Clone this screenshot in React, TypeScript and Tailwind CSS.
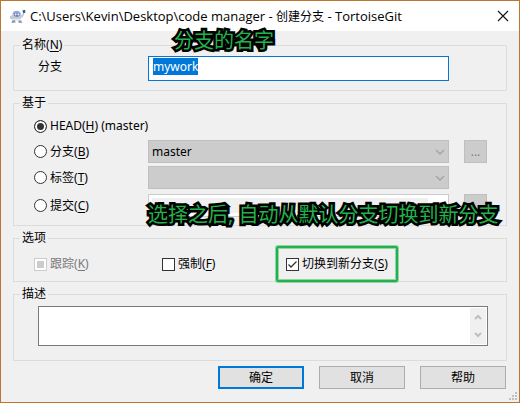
import { useEffect, useRef } from 'react';
import type { ReactNode } from 'react';

function Group({ title, hotkey, className, children }: { title: string; hotkey?: string; className: string; children: ReactNode }) {
  return (
    <fieldset className={`relative min-w-0 border border-[#dcdcdc] ${className}`}>
      <legend className="ml-1.5 h-4 px-0.5 leading-4">
        {title}
        {hotkey && <Hotkey k={hotkey} />}
      </legend>
      {children}
    </fieldset>
  );
}

function Hotkey({ k }: { k: string }) {
  return (
    <>
      (<span className="underline underline-offset-2">{k}</span>)
    </>
  );
}

function Radio({ id, checked, children }: { id: string; checked?: boolean; children: ReactNode }) {
  return (
    <div className="flex shrink-0 items-center gap-[3px]">
      <input
        type="radio"
        name="base"
        id={id}
        defaultChecked={checked}
        className="size-[13px] appearance-none rounded-full border border-[#333] bg-white checked:bg-[#333] checked:shadow-[inset_0_0_0_2px_white]"
      />
      <label htmlFor={id}>{children}</label>
    </div>
  );
}

function Check({ id, checked, disabled, children }: { id: string; checked?: boolean; disabled?: boolean; children: ReactNode }) {
  return (
    <div className={`flex items-center gap-[3px] whitespace-nowrap ${disabled ? 'text-[#7a7a7a]' : ''}`}>
      <span className="relative block size-[13px]">
        <input
          type="checkbox"
          id={id}
          defaultChecked={checked}
          disabled={disabled}
          className="peer block size-[13px] appearance-none border border-[#333] bg-white disabled:border-[#ccc] disabled:bg-[#ccc] disabled:shadow-[inset_0_0_0_2px_white]"
        />
        <svg viewBox="0 0 13 13" className="pointer-events-none absolute inset-0 hidden size-[13px] peer-checked:block" fill="none" stroke="#333" strokeWidth="1.3">
          <path d="M2.5 6.5 5 9l5.5-5.5" />
        </svg>
      </span>
      <label htmlFor={id}>{children}</label>
    </div>
  );
}

function Chevron() {
  return (
    <svg viewBox="0 0 10 6" className="pointer-events-none absolute top-1/2 right-1 h-1.5 w-2.5 -translate-y-1/2" fill="none" stroke="#a3a3a3" strokeWidth="1.3">
      <path d="m1 1 4 4 4-4" />
    </svg>
  );
}

function BrowseButton({ label, children }: { label: string; children?: ReactNode }) {
  return (
    <button type="button" disabled aria-label={label} className="block h-[23px] w-[23px] shrink-0 border border-[#bfbfbf] bg-[#ccc] leading-4 text-[#838383]">
      {children}
    </button>
  );
}

function Turtle() {
  return (
    <svg viewBox="0 0 17 15" className="h-[15px] w-[17px]">
      <path d="M1 7 4 6l2 3-3 1.5-2-1zM12 7l2.2-3 1.2.8L13 9.5z" fill="#c3c8d2" />
      <ellipse cx="7.8" cy="7" rx="4.8" ry="5" fill="#c2cbdc" />
      <path d="M3.6 4Q7.5-.6 11.6 4L11 5.4H4.6z" fill="#8fa8d8" />
      <path d="M5 4.6h5.8v2.2q-3 1.8-5.8 0z" fill="#5a75ae" />
      <circle cx="6.6" cy="5.6" r="1" fill="#eef3fd" />
      <circle cx="9.4" cy="5.6" r="1" fill="#eef3fd" />
      <path d="M5 9.5q3 1.6 5.8 0l-.5 2.5h-5z" fill="#eceef2" />
      <path d="M3 11.5 6 11l.6 2.6-4 .5zM9.4 11.2l2.9.3 1 2.2-3.7.3z" fill="#9299a6" />
      <path d="m13.4 1.4 2.6-.6.5 2.8-2.2.8z" fill="#35627f" />
    </svg>
  );
}

const note =
  "pointer-events-none absolute z-10 text-[20px] leading-6 whitespace-nowrap text-[#22b14c] [paint-order:stroke_fill] [-webkit-text-stroke:5px_black] [stroke-linejoin:round]";

export default function App() {
  const nameRef = useRef<HTMLInputElement>(null);
  useEffect(() => {
    nameRef.current?.focus();
    nameRef.current?.select();
  }, []);

  return (
    <form className="flex min-h-screen flex-col border border-[#c0752f] bg-[#f0f0f0] font-['Noto_Sans','Noto_Sans_CJK_SC',sans-serif] text-[12px] leading-4 text-black">
      <header className="flex h-[30px] shrink-0 items-center bg-white pr-2.5 pl-2">
        <Turtle />
        <h1 className="ml-1 flex-1 font-['Open_Sans','Noto_Sans_CJK_SC',sans-serif] text-[13px] whitespace-nowrap">
          C:\Users\Kevin\Desktop\code manager - <span className="text-[12px]">创建分支</span> - TortoiseGit
        </h1>
        <button type="button" aria-label="关闭" className="size-3">
          <svg viewBox="0 0 12 12" className="size-3" stroke="#111" strokeWidth="1.1">
            <path d="m1 1 10 10M11 1 1 11" />
          </svg>
        </button>
      </header>

      <main className="flex flex-col gap-1 px-3 pt-1.5">
        <Group title="名称" hotkey="N" className="h-[54px]">
          <div className="flex items-center pt-[3px] pr-[57px] pl-6">
            <label htmlFor="name" className="w-[110px] shrink-0 pb-1">
              分支
            </label>
            <input
              id="name"
              ref={nameRef}
              defaultValue="mywork"
              className="h-[25px] min-w-0 flex-1 border border-[#0078d7] bg-white px-1 pb-1 outline-none selection:bg-[#0078d7] selection:text-white"
            />
          </div>
          <p className={`${note} -top-6 left-[160px]`}>分支的名字</p>
        </Group>

        <Group title="基于" className="h-[131px]">
          <div className="flex flex-col gap-[3px] pr-[19px] pl-5">
            <div className="flex h-[26px] items-center pt-1">
              <Radio id="head" checked>
                HEAD
                <Hotkey k="H" /> (master)
              </Radio>
            </div>
            <div className="flex h-[23px] items-center">
              <div className="w-[114px] shrink-0">
                <Radio id="branch">
                  分支
                  <Hotkey k="B" />
                </Radio>
              </div>
              <div className="relative min-w-0 flex-1">
                <select disabled aria-label="分支" className="block h-[23px] w-full appearance-none border border-[#bfbfbf] bg-[#ccc] px-[3px] text-black opacity-100">
                  <option>master</option>
                </select>
                <Chevron />
              </div>
              <div className="ml-[15px]">
                <BrowseButton label="浏览分支">...</BrowseButton>
              </div>
            </div>
            <div className="flex h-[23px] items-center">
              <div className="w-[114px] shrink-0">
                <Radio id="tag">
                  标签
                  <Hotkey k="T" />
                </Radio>
              </div>
              <div className="relative mr-[38px] min-w-0 flex-1">
                <select disabled aria-label="标签" className="block h-[23px] w-full appearance-none border border-[#bfbfbf] bg-[#ccc] px-[3px] opacity-100">
                  <option></option>
                </select>
                <Chevron />
              </div>
            </div>
            <div className="flex h-[27px] items-center">
              <div className="w-[114px] shrink-0">
                <Radio id="commit">
                  提交
                  <Hotkey k="C" />
                </Radio>
              </div>
              <div className="relative min-w-0 flex-1 border border-[#ccc] bg-white py-[3px] pr-5 pl-[3px]">
                <input disabled aria-label="提交" className="block h-[15px] w-full bg-[#f0f0f0]" />
                <Chevron />
              </div>
              <div className="ml-[15px]">
                <BrowseButton label="浏览提交" />
              </div>
            </div>
          </div>
          <p className={`${note} -bottom-2 left-[134px]`}>选择之后, 自动从默认分支切换到新分支</p>
        </Group>

        <Group title="选项" className="h-[52px]">
          <div className="grid h-[31px] grid-cols-[128px_114px_auto] items-center justify-start pl-5">
            <Check id="track" disabled>
              跟踪
              <Hotkey k="K" />
            </Check>
            <Check id="force">
              强制
              <Hotkey k="F" />
            </Check>
            <div className="flex h-9 items-center rounded-xs border-2 border-[#22b14c] px-2 shadow-[0_0_0_1px_#8fd6a4,inset_0_0_0_1px_#8fd6a4]">
              <Check id="switch" checked>
                切换到新分支
                <Hotkey k="S" />
              </Check>
            </div>
          </div>
        </Group>

        <Group title="描述" className="h-[75px]">
          <div className="relative mt-1 mr-[18px] ml-6">
            <textarea aria-label="描述" className="block h-10 w-full resize-none overflow-hidden border border-[#7a7a7a] bg-white px-1 outline-none" />
            <div className="absolute inset-y-0.5 right-0.5 flex w-4 flex-col items-center justify-between bg-[#f0f0f0] py-1.5">
              <svg viewBox="0 0 8 6" className="h-1.5 w-2" fill="none" stroke="#bfbfbf" strokeWidth="2">
                <path d="m1 5 3-3 3 3" />
              </svg>
              <svg viewBox="0 0 8 6" className="h-1.5 w-2" fill="none" stroke="#bfbfbf" strokeWidth="2">
                <path d="m1 1 3 3 3-3" />
              </svg>
            </div>
          </div>
        </Group>
      </main>

      <footer className="flex justify-end gap-[15px] px-[13px] pt-[5px]">
        <button type="submit" className="h-[23px] w-[86px] border-2 border-[#0078d7] bg-[#e1e1e1]">
          确定
        </button>
        <button type="button" className="h-[23px] w-[86px] border border-[#adadad] bg-[#e1e1e1]">
          取消
        </button>
        <button type="button" className="h-[23px] w-[86px] border border-[#adadad] bg-[#e1e1e1]">
          帮助
        </button>
      </footer>
      <svg viewBox="0 0 8 8" className="mt-auto mr-0.5 mb-0.5 size-2 self-end" fill="#bfbfbf" shapeRendering="crispEdges">
        <path d="M6 0h2v2H6zM3 3h2v2H3zM6 3h2v2H6zM0 6h2v2H0zM3 6h2v2H3zM6 6h2v2H6z" />
      </svg>
    </form>
  );
}
